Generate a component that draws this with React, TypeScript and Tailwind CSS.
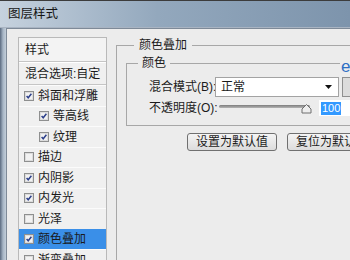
import React from "react";

function Check({ checked }: { checked: boolean }) {
  return (
    <svg width="10" height="10" viewBox="0 0 10 10" className="shrink-0">
      <rect x="0.5" y="0.5" width="9" height="9" fill="#ffffff" stroke="#8e8f8f" />
      <rect x="1.5" y="1.5" width="7" height="7" fill="#f2f2f2" stroke="#dcdcdc" />
      {checked && (
        <path d="M2.6 5.0 L4.2 6.8 L7.4 2.8" fill="none" stroke="#2c3f8a" strokeWidth="1.5" />
      )}
    </svg>
  );
}

const items: { label: string; checked: boolean; indent?: boolean; selected?: boolean }[] = [
  { label: "斜面和浮雕", checked: true },
  { label: "等高线", checked: true, indent: true },
  { label: "纹理", checked: true, indent: true },
  { label: "描边", checked: false },
  { label: "内阴影", checked: true },
  { label: "内发光", checked: true },
  { label: "光泽", checked: false },
  { label: "颜色叠加", checked: true, selected: true },
  { label: "渐变叠加", checked: false },
];

export default function App() {
  return (
    <div className="relative w-[350px] h-[260px] overflow-hidden flex flex-col text-[12px] text-[#1b1b1b] font-['Liberation_Sans','Noto_Sans_CJK_SC',sans-serif]">
      {/* Title bar */}
      <div className="h-[28px] shrink-0 border-t border-[#3c3c3c] bg-linear-to-r from-[#c6d2de] via-[#93a8bd] via-45% to-[#7d94ac] flex items-center pl-[8px] border-b border-b-[#a9b4c2]">
        <span className="leading-[14px] text-[12.5px] text-[#151515]">图层样式</span>
      </div>
      <div className="flex flex-1 min-h-0">
        {/* left window frame */}
        <div className="w-[6px] shrink-0 bg-linear-to-r from-[#5b6b80] via-[#a6b5c5] to-[#c3ced9]" />
        <div className="flex-1 bg-[#ececec] border-l border-t border-[#7e8a98] flex items-start pt-[8px] pl-[11px] overflow-hidden">
          {/* Style list */}
          <div className="w-[89px] shrink-0 border border-[#b9b9b9] bg-[#f0f0f0] h-[240px]">
            <div className="h-[24px] flex items-center pl-[6px] border-b border-[#c5c5c5] bg-[#f3f3f3] leading-[14px]">样式</div>
            <div className="h-[23px] flex items-center pl-[6px] border-b border-[#c5c5c5] border-t border-t-white leading-[14px]">混合选项:自定</div>
            {items.map((it) => (
              <div
                key={it.label}
                className={
                  "h-[20.5px] flex items-center border-t leading-[14px] " +
                  (it.selected ? "bg-[#3a8fe8] border-[#3a8fe8]" : "border-[#fbfbfb]") +
                  (it.indent ? " pl-[20px]" : " pl-[5px]")
                }
              >
                <Check checked={it.checked} />
                <span className="ml-[4px] whitespace-nowrap">{it.label}</span>
              </div>
            ))}
          </div>

          {/* Right panel */}
          <fieldset className="ml-[9px] w-[300px] shrink-0 border-l border-t border-[#a7a7a7] h-[240px] min-w-0">
            <legend className="ml-[17px] px-[5px] leading-[16px]">颜色叠加</legend>
            <fieldset className="ml-[9px] mt-[2px] w-[260px] border-l border-t border-b border-[#a7a7a7] pb-[8px] min-w-0">
              <legend className="ml-[11px] px-[4px] leading-[16px]">颜色</legend>
              <div className="flex items-center pl-[22px] mt-[6px] h-[20px]">
                <span className="w-[66px] whitespace-nowrap leading-[14px]">混合模式(B):</span>
                <div className="w-[124px] h-[20px] bg-white border border-[#a3a3a3] flex items-center justify-between pl-[5px] pr-[6px]">
                  <span className="leading-[14px]">正常</span>
                  <svg width="7" height="4" viewBox="0 0 7 4">
                    <path d="M0 0 H7 L3.5 4 Z" fill="#111" />
                  </svg>
                </div>
                <div className="ml-[3px] w-[22px] h-[20px] border border-[#8f8f8f] bg-[#dcdcdc]" />
              </div>
              <div className="flex items-center pl-[22px] mt-[2px] h-[18px]">
                <span className="w-[70px] whitespace-nowrap leading-[14px]">不透明度(O):</span>
                <div className="relative w-[93px] h-[16px]">
                  <div className="absolute left-0 right-[2px] top-[5px] h-[3px] rounded-full bg-linear-to-b from-[#7d7d7d] to-[#b5b5b5]" />
                  <svg className="absolute right-0 top-[3px]" width="11" height="11" viewBox="0 0 11 11">
                    <path d="M1 10 V6 L5.5 1.5 L10 6 V10 Z" fill="#ededed" stroke="#6e6e6e" strokeLinejoin="round" />
                  </svg>
                </div>
                <div className="ml-[7px] w-[40px] h-[16px] bg-white flex items-center pl-[2px]">
                  <span className="bg-[#3399ff] text-white text-[11px] leading-[13px] px-[1px]">100</span>
                </div>
              </div>
            </fieldset>
            <div className="flex mt-[7px] ml-[70px] gap-[10px]">
              <button className="w-[90px] h-[18px] shrink-0 rounded-[3px] border border-[#707070] bg-linear-to-b from-[#f4f4f4] to-[#dcdcdc] leading-[14px] flex items-center justify-center">设置为默认值</button>
              <button className="w-[90px] h-[18px] shrink-0 rounded-[3px] border border-[#707070] bg-linear-to-b from-[#f4f4f4] to-[#dcdcdc] leading-[14px] flex items-center justify-center">复位为默认值</button>
            </div>
          </fieldset>
        </div>
      </div>
      <span className="absolute left-[340px] top-[58px] text-[17px] leading-[18px] text-[#2f6fc4] bg-[#ececec] pl-[1px]">e</span>
    </div>
  );
}
